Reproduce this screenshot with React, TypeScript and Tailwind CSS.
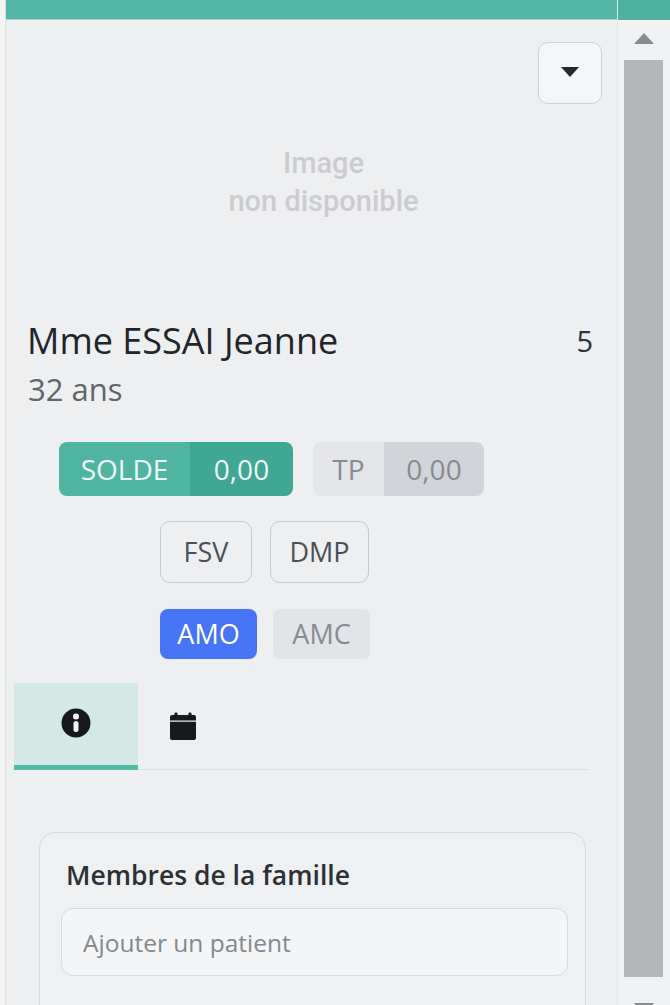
function InfoIcon() {
  return (
    <svg viewBox="0 0 30 30" className="h-[30px] w-[30px]">
      <circle cx="15" cy="15" r="14.5" fill="#17191c" />
      <circle cx="15" cy="8.5" r="3" fill="#f2f3f3" />
      <rect x="12.5" y="13" width="5" height="11" rx="2.5" fill="#f2f3f3" />
    </svg>
  );
}

function CalendarIcon() {
  return (
    <svg viewBox="0 0 26 28" className="h-[28px] w-[26px] fill-[#17191c]">
      <path d="M6 0.5c1 0 1.6.7 1.6 1.6V3h10.8v-.9c0-.9.6-1.6 1.6-1.6s1.6.7 1.6 1.6V3h2.4C25.100 3 26 3.900 26 5v3.500H0V5c0-1.100.9-2 2-2h2.400v-.9C4.400 1.200 5 .5 6 .5zM0 9.800h26V26c0 1.100-.9 2-2 2H2c-1.100 0-2-.9-2-2V9.800z" />
    </svg>
  );
}

export default function App() {
  return (
    <div className="flex h-[1005px] w-[670px] overflow-hidden bg-[#eeeff1] font-['Open_Sans',sans-serif]">
      <div className="w-[6px] shrink-0 border-r border-[#dfe0e2] bg-[#f4f4f5]" />

      <div className="w-[611px] shrink-0 overflow-hidden">
        <div className="h-[20px] border-b border-[#a5dccf] bg-[#52b5a5]" />

        <div className="flex justify-end pr-[15px] pt-[22px]">
          <button className="flex h-[62px] w-[64px] items-center justify-center rounded-[10px] border border-[#cfd1d5] bg-[#f5f6f7]">
            <span className="mt-[-2px] h-0 w-0 border-x-[9px] border-t-[10px] border-x-transparent border-t-[#26282c]" />
          </button>
        </div>

        <div className="mt-[40px] pl-[24px] text-center font-['Roboto',sans-serif] text-[29px] leading-[38px] font-medium text-[#cbccd0]">
          <div>Image</div>
          <div>non disponible</div>
        </div>

        <div className="mt-[99px] flex items-center justify-between pl-[21px] pr-[24px]">
          <span className="text-[36px] leading-[44px] text-[#212529]">Mme ESSAI Jeanne</span>
          <span className="text-[29px] font-medium leading-[44px] text-[#2f3338]">5</span>
        </div>
        <div className="mt-[7px] pl-[22px] text-[31px] leading-[38px] text-[#5f656b]">32 ans</div>

        <div className="mt-[34px] flex h-[54px] gap-[20px] pl-[53px] text-[28px]">
          <div className="flex overflow-hidden rounded-[8px]">
            <span className="flex w-[131px] items-center justify-center bg-[#4fb5a2] text-[#eef8f5]">SOLDE</span>
            <span className="flex w-[103px] items-center justify-center bg-[#3fa793] text-[#eef8f5]">0,00</span>
          </div>
          <div className="flex overflow-hidden rounded-[8px]">
            <span className="flex w-[71px] items-center justify-center bg-[#e3e5e9] text-[#868c93]">TP</span>
            <span className="flex w-[100px] items-center justify-center bg-[#d2d4d9] text-[#868c93]">0,00</span>
          </div>
        </div>

        <div className="mt-[25px] flex gap-[18px] pl-[154px] text-[27px] text-[#4b5056]">
          <button className="flex h-[62px] w-[92px] items-center justify-center rounded-[10px] border border-[#c7c9cc]">FSV</button>
          <button className="flex h-[62px] w-[99px] items-center justify-center rounded-[10px] border border-[#c7c9cc]">DMP</button>
        </div>

        <div className="mt-[26px] flex gap-[16px] pl-[154px] text-[27px]">
          <span className="flex h-[50px] w-[97px] items-center justify-center rounded-[8px] bg-[#4674f5] font-medium text-white">AMO</span>
          <span className="flex h-[50px] w-[97px] items-center justify-center rounded-[6px] bg-[#e2e4e8] text-[#868c93]">AMC</span>
        </div>

        <div className="ml-[8px] mt-[24px] flex w-[575px] border-b border-[#e0e1e4]">
          <div className="mb-[-1px] flex h-[87px] w-[124px] items-start justify-center border-b-[5px] border-[#52b9a6] bg-[#d4e8e5] pt-[25px]">
            <InfoIcon />
          </div>
          <div className="flex w-[90px] items-start justify-center pt-[29px]">
            <CalendarIcon />
          </div>
        </div>

        <div className="ml-[33px] mt-[62px] h-[300px] w-[547px] rounded-[16px] border border-[#d9dbde] bg-[#eff0f2] px-[21px] pt-[24px]">
          <div className="pl-[5px] text-[26.500px] font-semibold leading-[36px] text-[#2c3035]">Membres de la famille</div>
          <input
            readOnly
            placeholder="Ajouter un patient"
            className="mt-[15px] h-[68px] w-[507px] rounded-[12px] border border-[#d8dadd] bg-[#f4f5f6] px-[21px] text-[24.500px] outline-none placeholder:text-[#83888e]"
          />
        </div>
      </div>

      <div className="flex w-[53px] shrink-0 flex-col items-center border-l border-[#e6e7e9] bg-[#f1f2f3] pr-[1px]">
        <div className="mr-[-1px] h-[20px] w-[52px] shrink-0 bg-[#4eb09f]" />
        <span className="mt-[13px] h-0 w-0 border-x-[10px] border-b-[11px] border-x-transparent border-b-[#8a8b8d]" />
        <div className="mt-[16px] h-[917px] w-[39px] shrink-0 bg-[#b5b6b8]" />
        <span className="mt-[26px] h-0 w-0 border-x-[10px] border-t-[11px] border-x-transparent border-t-[#8a8b8d]" />
      </div>
    </div>
  );
}
